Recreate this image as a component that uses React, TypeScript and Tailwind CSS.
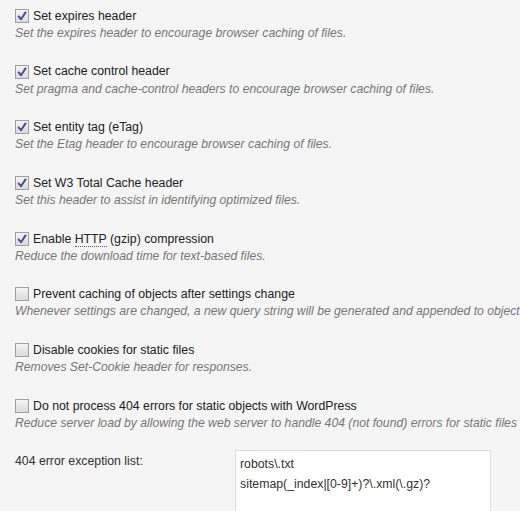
import React from 'react';

type Option = {
  label: React.ReactNode;
  desc: string;
  checked: boolean;
};

const options: Option[] = [
  { label: 'Set expires header', desc: 'Set the expires header to encourage browser caching of files.', checked: true },
  { label: 'Set cache control header', desc: 'Set pragma and cache-control headers to encourage browser caching of files.', checked: true },
  { label: 'Set entity tag (eTag)', desc: 'Set the Etag header to encourage browser caching of files.', checked: true },
  { label: 'Set W3 Total Cache header', desc: 'Set this header to assist in identifying optimized files.', checked: true },
  {
    label: (
      <>
        Enable <abbr className="no-underline border-b border-dotted border-[#555]">HTTP</abbr> (gzip) compression
      </>
    ),
    desc: 'Reduce the download time for text-based files.',
    checked: true,
  },
  {
    label: 'Prevent caching of objects after settings change',
    desc: 'Whenever settings are changed, a new query string will be generated and appended to objects allowing the new policy to be applied.',
    checked: false,
  },
  { label: 'Disable cookies for static files', desc: 'Removes Set-Cookie header for responses.', checked: false },
  {
    label: 'Do not process 404 errors for static objects with WordPress',
    desc: 'Reduce server load by allowing the web server to handle 404 (not found) errors for static files rather than WordPress.',
    checked: false,
  },
];

const Checkbox = ({ checked }: { checked: boolean }) => (
  <span className="w-[14px] h-[14px] shrink-0 border border-[#a0a0a0] bg-gradient-to-b from-[#f6f6f6] to-[#dadada] flex items-center justify-center">
    {checked && (
      <svg width="12" height="12" viewBox="0 0 12 12">
        <path d="M2.6 6.4 L5 9.2 L9.6 2.4" fill="none" stroke="#414a96" strokeWidth="1.9" strokeLinecap="round" strokeLinejoin="round" />
      </svg>
    )}
  </span>
);

const App = () => {
  return (
    <div className="w-[520px] h-[511px] overflow-hidden bg-[#f5f5f5] font-['Liberation_Sans',Arial,sans-serif] pl-[15px] pt-[7px]">
      <div className="flex flex-col gap-[21.7px]">
        {options.map((opt, i) => (
          <div key={i} className="flex flex-col">
            <label className="flex items-center gap-[4px] h-[18px] text-[12.3px] text-[#222] whitespace-nowrap">
              <Checkbox checked={opt.checked} />
              <span>{opt.label}</span>
            </label>
            <p className="h-[16px] leading-[16px] text-[12.2px] italic text-[#777] whitespace-nowrap overflow-hidden">{opt.desc}</p>
          </div>
        ))}
      </div>
      <div className="flex mt-[19px]">
        <div className="w-[220px] pt-[1px] text-[12.3px] text-[#333] leading-[20px]">404 error exception list:</div>
        <div className="w-[256px] h-[80px] bg-white border border-[#dedede] px-[4px] pt-[3px] text-[12.3px] leading-[20px] text-[#333]">
          <div>robots\.txt</div>
          <div>sitemap(_index|[0-9]+)?\.xml(\.gz)?</div>
        </div>
      </div>
    </div>
  );
};

export default App;
